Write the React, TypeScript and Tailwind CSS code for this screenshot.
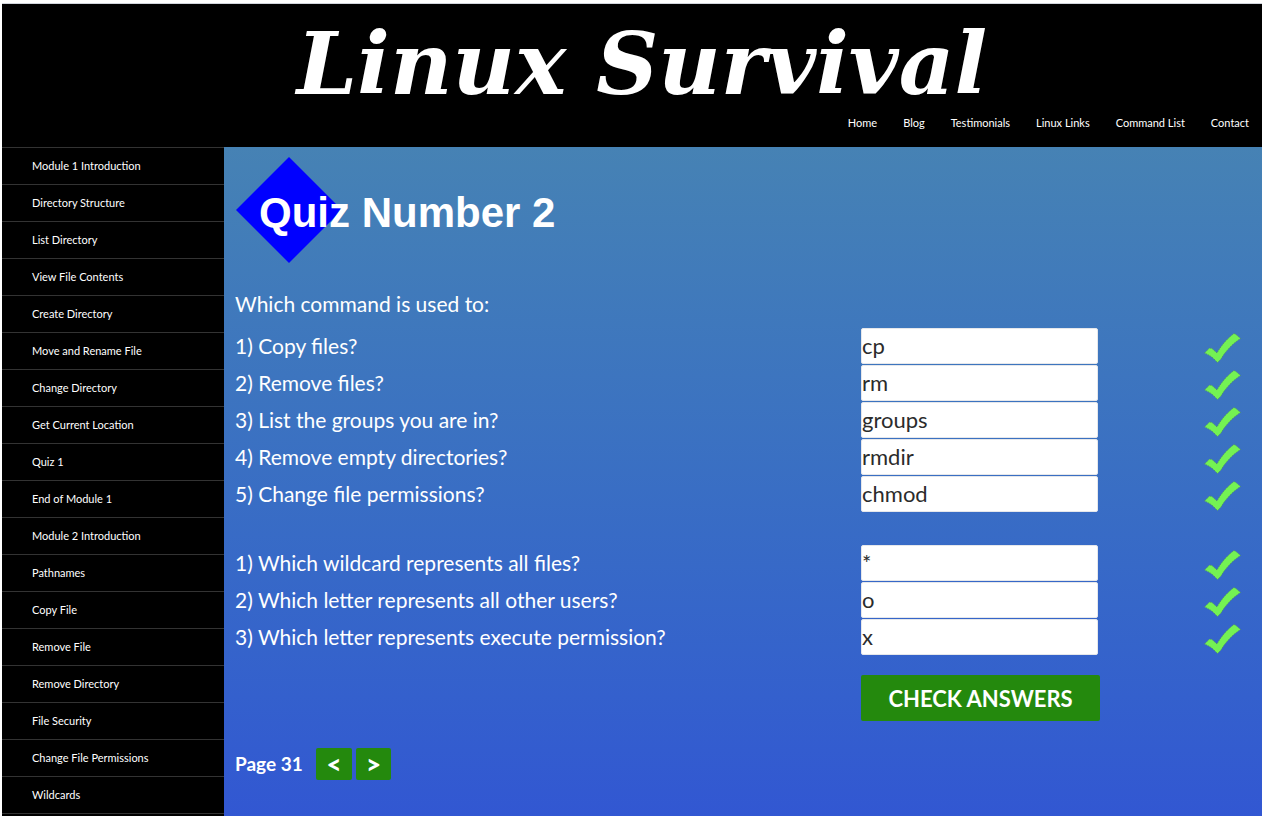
import { useState } from "react";

const topLinks = ["Home", "Blog", "Testimonials", "Linux Links", "Command List", "Contact"];

const lessons = [
  "Module 1 Introduction",
  "Directory Structure",
  "List Directory",
  "View File Contents",
  "Create Directory",
  "Move and Rename File",
  "Change Directory",
  "Get Current Location",
  "Quiz 1",
  "End of Module 1",
  "Module 2 Introduction",
  "Pathnames",
  "Copy File",
  "Remove File",
  "Remove Directory",
  "File Security",
  "Change File Permissions",
  "Wildcards",
];

type Question = { id: string; text: string; answer: string };

const commandQuestions: Question[] = [
  { id: "copy", text: "1) Copy files?", answer: "cp" },
  { id: "remove", text: "2) Remove files?", answer: "rm" },
  { id: "groups", text: "3) List the groups you are in?", answer: "groups" },
  { id: "rmdir", text: "4) Remove empty directories?", answer: "rmdir" },
  { id: "chmod", text: "5) Change file permissions?", answer: "chmod" },
];

const symbolQuestions: Question[] = [
  { id: "wildcard", text: "1) Which wildcard represents all files?", answer: "*" },
  { id: "others", text: "2) Which letter represents all other users?", answer: "o" },
  { id: "execute", text: "3) Which letter represents execute permission?", answer: "x" },
];

function CheckMark() {
  return (
    <svg width="37" height="30" viewBox="0 0 37 30" className="mt-[5px] ml-auto" role="img" aria-label="Correct">
      <path
        d="M0.500 20 L5.500 15 L8 15.500 L13 20 C17 13 23 5.500 30 0.500 L32 1.500 L36.500 5.500 C28 11 21 19 17 26 L13.500 29.500 L10 26 C7 23 4 21.500 0.500 20 Z"
        fill="#74f253"
        stroke="#4f8f5a"
        strokeWidth="0.7"
        strokeDasharray="1.500 1"
      />
    </svg>
  );
}

function QuestionRow({ question }: { question: Question }) {
  const [value, setValue] = useState(question.answer);
  return (
    <div className="grid h-[37px] grid-cols-[626px_237px_1fr] items-center pr-[21px]">
      <label htmlFor={question.id} className="text-[21px] leading-9">
        {question.text}
      </label>
      <input
        id={question.id}
        value={value}
        onChange={(e) => setValue(e.target.value)}
        className="h-9 w-full rounded-xs border border-gray-200 bg-white text-[22px] text-[#2b2b2b]"
      />
      <CheckMark />
    </div>
  );
}

export default function App() {
  return (
    <div className="flex min-h-screen flex-col bg-white pt-[3px] pr-px pl-0.5 font-['Lato',sans-serif] text-white">
      <header className="flex h-36 flex-col border-t border-gray-300 bg-black">
        <h1 className="flex h-[107px] items-center justify-center pt-3 pl-5 font-['DejaVu_Serif',serif] text-[86px] leading-none font-bold whitespace-nowrap italic">
          Linux Survival
        </h1>
        <nav className="flex justify-end gap-[26px] pr-[13px] text-[11px] leading-6">
          {topLinks.map((link) => (
            <a key={link} href="#">
              {link}
            </a>
          ))}
        </nav>
      </header>

      <div className="flex flex-1">
        <nav className="w-[222px] shrink-0 border-t border-[#333333] bg-black text-[11px]">
          {lessons.map((lesson) => (
            <a
              key={lesson}
              href="#"
              className="flex h-[37px] items-center border-b border-[#333333] pl-[30px]"
            >
              {lesson}
            </a>
          ))}
        </nav>

        <main className="flex-1 bg-linear-to-b from-[#4682b4] to-[#3257d2] pl-[11px]">
          <div className="flex h-[125px] items-center">
            <svg width="108" height="108" viewBox="0 0 108 108" className="shrink-0" aria-hidden="true">
              <path d="M54 1 L107 54 L54 107 L1 54 Z" fill="#0000ff" />
            </svg>
            <h2 className="relative -ml-[84px] pt-1.5 font-['Liberation_Sans',sans-serif] text-[42px] leading-none font-bold">
              Quiz Number 2
            </h2>
          </div>

          <p className="pt-[14px] pb-[5px] text-[21px] leading-9">Which command is used to:</p>
          <div>
            {commandQuestions.map((q) => (
              <QuestionRow key={q.id} question={q} />
            ))}
          </div>
          <div className="pt-8">
            {symbolQuestions.map((q) => (
              <QuestionRow key={q.id} question={q} />
            ))}
          </div>

          <button className="mt-5 ml-[626px] block h-[46px] w-[239px] rounded-xs bg-[#24890d] text-[22px] font-bold">
            CHECK ANSWERS
          </button>

          <div className="flex items-center gap-1 pt-[27px] text-[19px] font-bold">
            <span className="w-[77px]">Page 31</span>
            <button aria-label="Previous page" className="h-8 w-9 rounded-xs bg-[#24890d] text-[26px] leading-none font-black">
              &lt;
            </button>
            <button aria-label="Next page" className="h-8 w-[35px] rounded-xs bg-[#24890d] text-[26px] leading-none font-black">
              &gt;
            </button>
          </div>
        </main>
      </div>
    </div>
  );
}
